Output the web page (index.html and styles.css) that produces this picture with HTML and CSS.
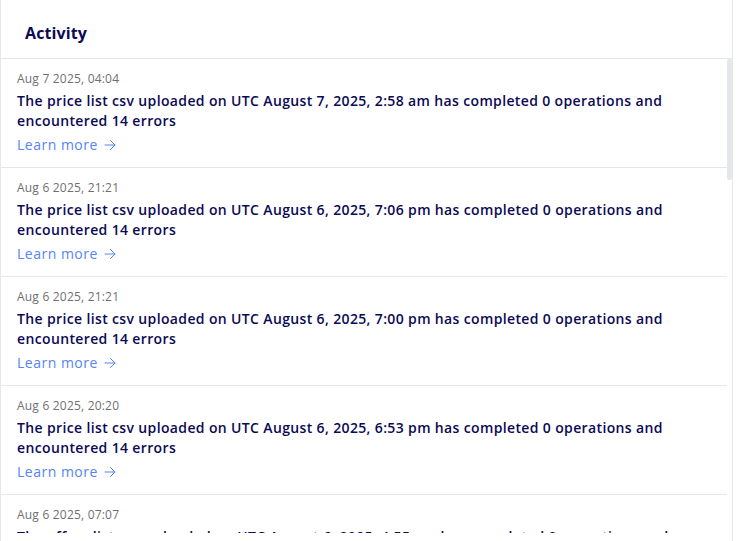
FILE: index.html
```html
<!DOCTYPE html>
<html lang="en">
<head>
<meta charset="utf-8">
<title>Activity</title>
<link rel="stylesheet" href="styles.css">
</head>
<body>
<section class="card">
  <header class="card-head"><h2 class="card-title">Activity</h2></header>
  <div class="card-body">
    <div class="feed">
      <article class="item">
        <div class="date">Aug 7 2025, 04:04</div>
        <p class="msg">The price list csv uploaded on UTC August 7, 2025, 2:58 am has completed 0 operations and encountered 14 errors</p>
        <a class="more" href="#">Learn more <span class="arrow"><svg viewBox="0 0 12 12" width="12" height="12"><path d="M1 6h10M6.5 1.5 11 6l-4.5 4.5" fill="none" stroke="currentColor" stroke-width="1" stroke-linecap="round" stroke-linejoin="round"/></svg></span></a>
      </article>
      <article class="item">
        <div class="date">Aug 6 2025, 21:21</div>
        <p class="msg">The price list csv uploaded on UTC August 6, 2025, 7:06 pm has completed 0 operations and encountered 14 errors</p>
        <a class="more" href="#">Learn more <span class="arrow"><svg viewBox="0 0 12 12" width="12" height="12"><path d="M1 6h10M6.5 1.5 11 6l-4.5 4.5" fill="none" stroke="currentColor" stroke-width="1" stroke-linecap="round" stroke-linejoin="round"/></svg></span></a>
      </article>
      <article class="item">
        <div class="date">Aug 6 2025, 21:21</div>
        <p class="msg">The price list csv uploaded on UTC August 6, 2025, 7:00 pm has completed 0 operations and encountered 14 errors</p>
        <a class="more" href="#">Learn more <span class="arrow"><svg viewBox="0 0 12 12" width="12" height="12"><path d="M1 6h10M6.5 1.5 11 6l-4.5 4.5" fill="none" stroke="currentColor" stroke-width="1" stroke-linecap="round" stroke-linejoin="round"/></svg></span></a>
      </article>
      <article class="item">
        <div class="date">Aug 6 2025, 20:20</div>
        <p class="msg">The price list csv uploaded on UTC August 6, 2025, 6:53 pm has completed 0 operations and encountered 14 errors</p>
        <a class="more" href="#">Learn more <span class="arrow"><svg viewBox="0 0 12 12" width="12" height="12"><path d="M1 6h10M6.5 1.5 11 6l-4.5 4.5" fill="none" stroke="currentColor" stroke-width="1" stroke-linecap="round" stroke-linejoin="round"/></svg></span></a>
      </article>
      <article class="item">
        <div class="date">Aug 6 2025, 07:07</div>
        <p class="msg">The offers list csv uploaded on UTC August 6, 2025, 4:55 am has completed 0 operations and encountered 14 errors</p>
        <a class="more" href="#">Learn more <span class="arrow"><svg viewBox="0 0 12 12" width="12" height="12"><path d="M1 6h10M6.5 1.5 11 6l-4.5 4.5" fill="none" stroke="currentColor" stroke-width="1" stroke-linecap="round" stroke-linejoin="round"/></svg></span></a>
      </article>
    </div>
    <div class="track"><div class="thumb"></div></div>
  </div>
</section>
</body>
</html>
```
FILE: styles.css
```css
* { box-sizing: border-box; }
html, body { margin: 0; padding: 0; height: 100%; background: #ffffff; }
body { font-family: "Open Sans", "Noto Sans", sans-serif; overflow: hidden; }

.card {
  width: 733px;
  height: 541px;
  border-left: 1px solid #e6e7eb;
  border-right: 1px solid #e6e7eb;
  display: flex;
  flex-direction: column;
  background: #fff;
}

.card-head {
  height: 59px;
  flex: none;
  border-bottom: 1px solid #e6e7eb;
  display: flex;
  align-items: center;
  padding: 8px 0 0 24px;
}
.card-title {
  margin: 0;
  font-size: 16px;
  font-weight: 700;
  color: #0b0a55;
  letter-spacing: 0.1px;
}

.card-body {
  flex: 1;
  min-height: 0;
  display: flex;
  padding-bottom: 8px;
}

.feed {
  flex: 1;
  min-width: 0;
  overflow: hidden;
}

.track {
  width: 5px;
  flex: none;
}
.thumb {
  height: 121px;
  background: #e5e7eb;
  border-radius: 2px;
}

.item {
  padding: 12px 16px 12px 16px;
  border-bottom: 1px solid #e6e7eb;
  display: flex;
  flex-direction: column;
  gap: 4px;
}
.date {
  font-size: 12px;
  line-height: 16px;
  color: #6f6f72;
  letter-spacing: 0.2px;
}
.msg {
  margin: 0;
  font-size: 14px;
  line-height: 20px;
  font-weight: 600;
  color: #0b0a55;
  letter-spacing: 0.36px;
}
.more {
  font-size: 14px;
  line-height: 20px;
  color: #5584f4;
  text-decoration: none;
  letter-spacing: 0.5px;
  display: flex;
  align-items: center;
  gap: 6px;
}
.arrow { display: inline-flex; }
```
